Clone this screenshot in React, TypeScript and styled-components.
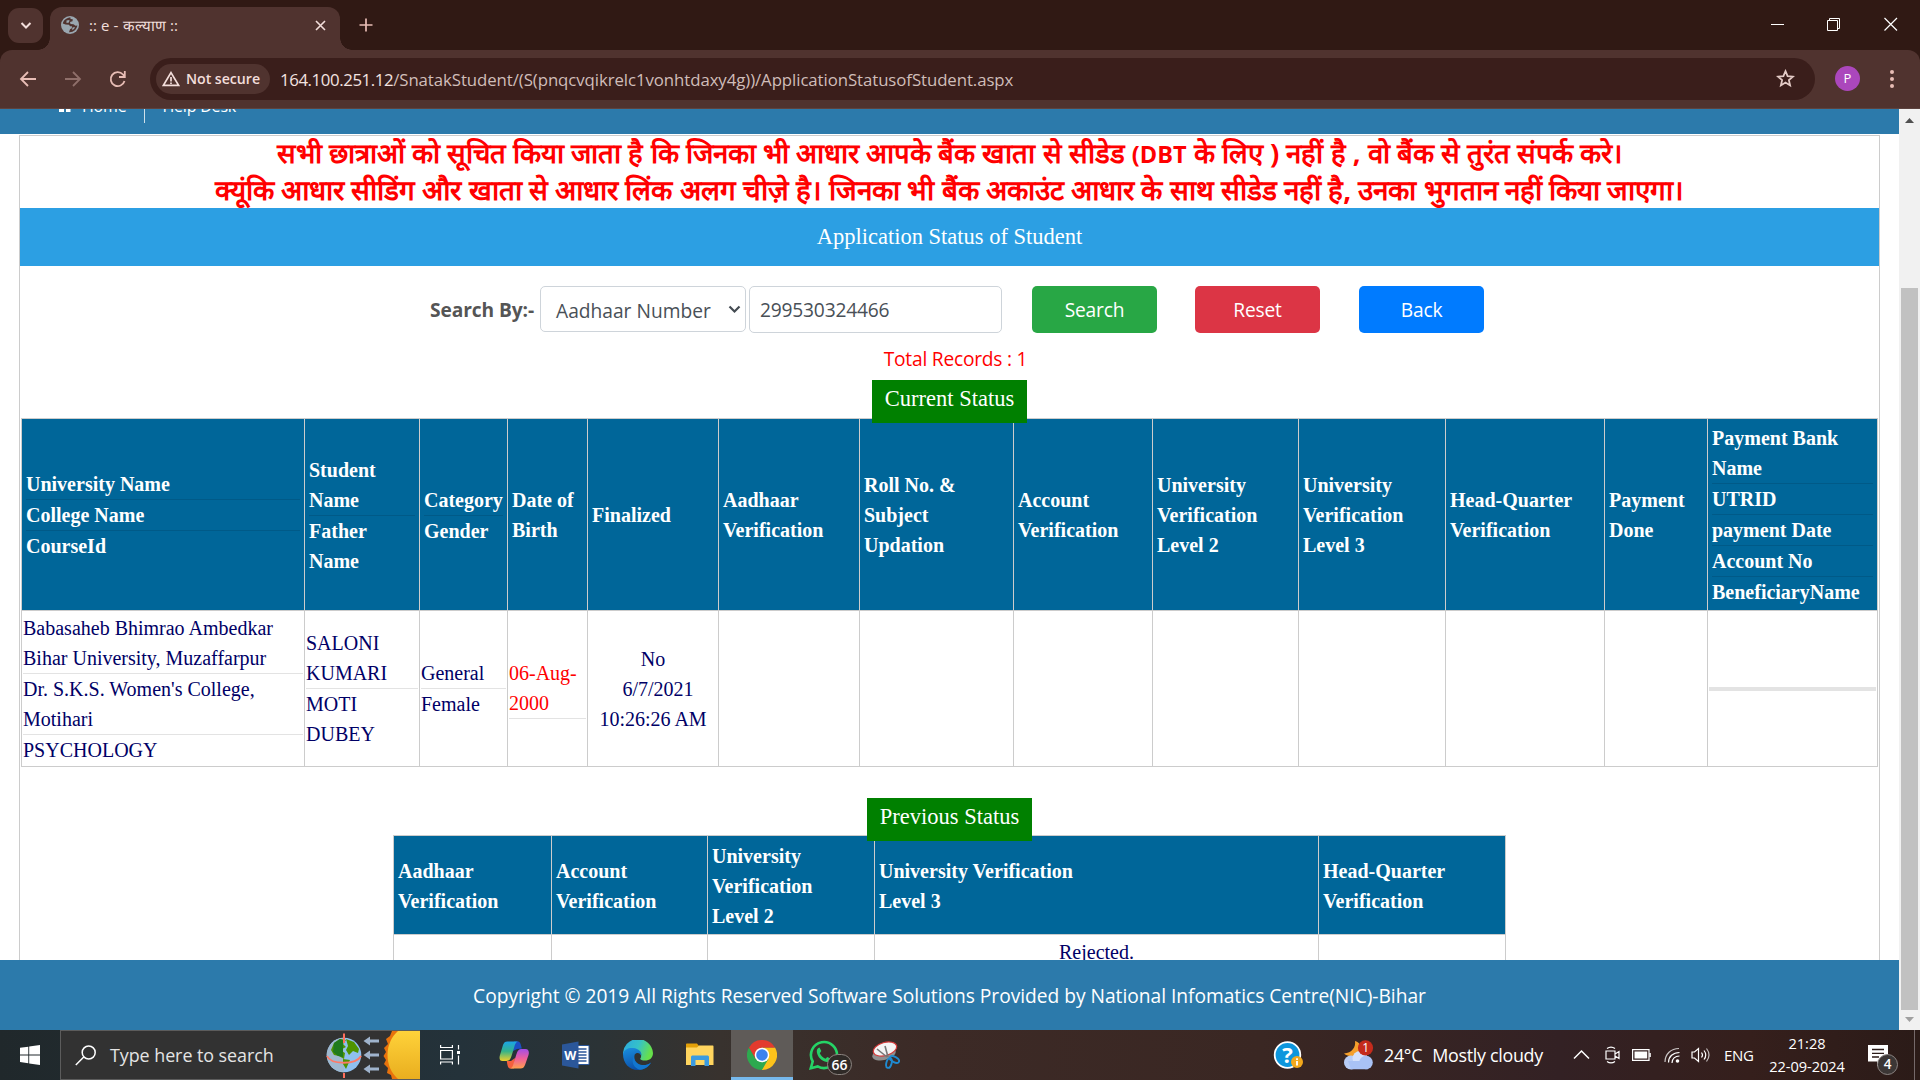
import React from "react";
import styled, { createGlobalStyle, css } from "styled-components";

const sans = `"Open Sans", "Noto Sans", sans-serif`;
const hindi = `"Open Sans", sans-serif`;
const serif = `"Liberation Serif", "Times New Roman", serif`;

const GlobalStyle = createGlobalStyle`
  *, *::before, *::after { box-sizing: border-box; }
  body { margin: 0; overflow: hidden; background: #fff; }
  svg { display: block; flex: none; }
`;

const Screen = styled.div`
  width: 1920px;
  height: 1080px;
  display: flex;
  flex-direction: column;
  overflow: hidden;
  font-family: ${sans};
`;

/* ---------- browser chrome ---------- */

const TabStrip = styled.header`
  height: 50px;
  flex: none;
  display: flex;
  align-items: flex-start;
  padding: 7px 22px 0 8px;
  background: #301914;
`;

const TabSearch = styled.button`
  width: 35px;
  height: 35px;
  margin: 1px 0 0;
  padding: 0;
  border: 0;
  border-radius: 11px;
  background: #50332f;
  display: grid;
  place-items: center;
`;

const Tab = styled.div`
  position: relative;
  width: 290px;
  height: 43px;
  margin-left: 7px;
  padding: 0 14px 7px 11px;
  display: flex;
  align-items: center;
  border-radius: 12px 12px 0 0;
  background: #50332f;

  &::before,
  &::after {
    content: "";
    position: absolute;
    bottom: 0;
    width: 12px;
    height: 12px;
  }
  &::before {
    left: -12px;
    background: radial-gradient(circle at 0 0, transparent 11.5px, #50332f 12px);
  }
  &::after {
    right: -12px;
    background: radial-gradient(circle at 100% 0, transparent 11.5px, #50332f 12px);
  }
`;

const TabTitle = styled.span`
  flex: 1;
  margin-left: 10px;
  font-family: ${hindi};
  font-size: 15px;
  line-height: 20px;
  letter-spacing: 0.1px;
  white-space: pre;
  color: #f0dfdc;
`;

const NewTab = styled.div`
  margin: 11px 0 0 19px;
`;

const WindowButtons = styled.div`
  margin-left: auto;
  padding-top: 10px;
  display: flex;
  gap: 43px;
`;

const Toolbar = styled.div`
  height: 59px;
  flex: none;
  display: flex;
  align-items: center;
  padding: 0 22px 1px 19px;
  background: #50332f;
  border-bottom: 1px solid #5d433f;
  border-radius: 12px 12px 0 0;
`;

const ToolbarBack = styled.div`
  flex: none;
  background: #301914;
`;

const NavIcons = styled.div`
  display: flex;
  align-items: center;
  gap: 27px;
`;

const Omnibox = styled.div`
  flex: none;
  width: 1665px;
  height: 42px;
  margin-left: 24px;
  padding: 0 20px 0 6px;
  display: flex;
  align-items: center;
  border-radius: 21px;
  background: #3a1e1b;
`;

const SecurityChip = styled.div`
  width: 114px;
  height: 30px;
  padding-left: 6px;
  display: flex;
  align-items: center;
  gap: 6px;
  border-radius: 15px;
  background: #50332f;
  color: #f3dedb;
  font-size: 14.2px;
  font-weight: 600;
  letter-spacing: -0.05px;
  white-space: nowrap;
`;

const Url = styled.div`
  flex: 1;
  margin-left: 10px;
  padding-top: 1px;
  font-size: 16.8px;
  letter-spacing: -0.07px;
  color: #d0bdb9;
  white-space: nowrap;
`;

const Host = styled.span`
  color: #f3e3e0;
  letter-spacing: -0.4px;
`;

const Avatar = styled.div`
  width: 25px;
  height: 25px;
  margin-left: 20px;
  border-radius: 50%;
  background: #ab47bc;
  color: #fff;
  font-size: 13px;
  line-height: 25px;
  text-align: center;
`;

const MenuDots = styled.div`
  margin-left: auto;
  margin-right: 4px;
  display: grid;
  gap: 3px;

  i {
    width: 4px;
    height: 4px;
    border-radius: 50%;
    background: #e8bdb5;
  }
`;

/* ---------- page ---------- */

const Browser = styled.div`
  height: 921px;
  flex: none;
  display: flex;
  background: #fff;
`;

const Page = styled.div`
  width: 1899px;
  height: 100%;
  display: flex;
  flex-direction: column;
`;

const SiteNav = styled.nav`
  height: 25px;
  flex: none;
  display: flex;
  align-items: flex-end;
  padding-left: 59px;
  overflow: hidden;
  background: #2c7aab;
  color: #fff;
  font-size: 16px;
`;

const NavLink = styled.a<{ $divided?: boolean }>`
  height: 42px;
  padding-bottom: 14px;
  display: flex;
  align-items: center;
  gap: 11px;
  line-height: 28px;
  letter-spacing: -0.2px;

  svg {
    margin-top: 2px;
  }
  ${(p) =>
    p.$divided &&
    css`
      &::after {
        content: "";
        width: 1px;
        height: 24px;
        margin: 5px 17px -5px 7px;
        background: #cfe0ea;
      }
    `}
`;

const Panel = styled.main`
  flex: 1;
  min-height: 0;
  margin: 1px 19px 0;
  border: 1px solid #ccc;
  border-bottom: 0;
  overflow: hidden;
  display: flex;
  flex-direction: column;
  align-items: center;
`;

const Notice = styled.p<{ $size: number }>`
  flex: none;
  margin: 0;
  height: 36px;
  line-height: 34px;
  font-family: ${hindi};
  font-size: ${(p) => p.$size}px;
  font-weight: 700;
  white-space: nowrap;
  color: #f00;

  small {
    font-size: 23.5px;
  }
`;

const TitleBar = styled.h1`
  flex: none;
  align-self: stretch;
  margin: 0;
  height: 58px;
  background: #2c9fe3;
  color: #fff;
  font: 400 22.5px/58px ${serif};
  text-align: center;
`;

const SearchRow = styled.div`
  flex: none;
  align-self: stretch;
  display: flex;
  align-items: flex-start;
  margin: 20px 0 0 410px;
  height: 47px;
  font-size: 19.2px;
  line-height: 47px;
  color: #495057;
`;

const SearchLabel = styled.label`
  width: 110px;
  font-weight: 700;
  letter-spacing: -0.1px;
  color: #555;
`;

const Select = styled.div`
  width: 206px;
  height: 46px;
  padding: 2px 4px 0 15px;
  display: flex;
  align-items: center;
  justify-content: space-between;
  border: 1px solid #ced4da;
  border-radius: 5px;

  svg {
    margin-bottom: 2px;
  }
`;

const TextBox = styled.input`
  width: 253px;
  height: 47px;
  margin-left: 3px;
  padding: 0 10px;
  border: 1px solid #ced4da;
  border-radius: 5px;
  font: 19.2px ${sans};
  letter-spacing: -0.2px;
  color: #495057;
  background: #fff;
`;

const Button = styled.button<{ $color: string; $gap: number }>`
  width: 125px;
  height: 47px;
  margin-left: ${(p) => p.$gap}px;
  padding: 0;
  border: 0;
  border-radius: 5px;
  background: ${(p) => p.$color};
  color: #fff;
  font: 19.2px ${sans};
  letter-spacing: -0.2px;
`;

const Total = styled.div`
  flex: none;
  height: 47px;
  margin-left: 12px;
  padding-top: 11px;
  font-size: 19.2px;
  line-height: 30px;
  letter-spacing: -0.23px;
  color: #f00;
`;

const Badge = styled.div<{ $overlap: number; $width: number }>`
  flex: none;
  position: relative;
  z-index: 1;
  width: ${(p) => p.$width}px;
  height: 43px;
  margin-bottom: -${(p) => p.$overlap}px;
  padding-top: 2px;
  background: #008000;
  color: #fff;
  font: 22.5px/33px ${serif};
  text-align: center;
  white-space: nowrap;
`;

const Grid = styled.table<{ $width: number; $gapBelow?: number }>`
  flex: none;
  width: ${(p) => p.$width}px;
  margin-bottom: ${(p) => p.$gapBelow ?? 0}px;
  border-collapse: collapse;
  table-layout: fixed;
  font: 20px/30px ${serif};

  th,
  td {
    border: 1px solid #ccc;
  }
`;

const HeadCell = styled.th`
  padding: 4px 4px 3px;
  background: #006699;
  color: #fff;
  font-weight: 700;
  text-align: left;
`;

const Cell = styled.td<{ $center?: boolean; $red?: boolean }>`
  padding: 1px;
  color: ${(p) => (p.$red ? "#f00" : "#000066")};
  text-align: ${(p) => (p.$center ? "center" : "left")};
`;

const Row = styled.tr<{ $h: number }>`
  height: ${(p) => p.$h}px;
`;

const Rule = styled.hr<{ $thick?: boolean }>`
  margin: 0;
  border: 0;
  height: ${(p) => (p.$thick ? 4 : 1)}px;
  background: rgba(0, 0, 0, 0.11);
`;

const Footer = styled.footer`
  flex: none;
  height: 70px;
  padding-top: 1px;
  background: #2c7aab;
  color: #fff;
  font-size: 19.2px;
  line-height: 70px;
  letter-spacing: -0.02px;
  text-align: center;
`;

const Scrollbar = styled.div`
  width: 21px;
  display: flex;
  flex-direction: column;
  align-items: center;
  padding: 9px 0 8px;
  background: #f1f1f1;
`;

const Thumb = styled.div`
  width: 17px;
  height: 722px;
  margin: 165px 0 auto;
  background: #c1c1c1;
`;

/* ---------- taskbar ---------- */

const Taskbar = styled.footer`
  height: 50px;
  flex: none;
  display: flex;
  align-items: center;
  background: linear-gradient(
    90deg,
    #20282b 0,
    #24323a 460px,
    #2b3336 600px,
    #38322e 720px,
    #3c2a26 930px,
    #3a2723 1260px,
    #332124 1560px,
    #351f1c 1750px,
    #2b1b18 1920px
  );
  color: #fff;
`;

const Start = styled.div`
  width: 60px;
  display: grid;
  place-items: center;
`;

const TaskSearch = styled.div`
  width: 360px;
  height: 50px;
  padding-left: 14px;
  display: flex;
  align-items: center;
  border: 1px solid #5c5c5c;
  border-right: 0;
  background: #323232;
  font-size: 17.9px;
  letter-spacing: -0.05px;
  color: #e4e4e4;
  white-space: nowrap;

  span {
    margin-left: 14px;
    width: 216px;
  }
`;

const TaskButton = styled.div<{ $active?: boolean; $first?: boolean }>`
  position: relative;
  flex: none;
  width: ${(p) => (p.$first ? 60 : 62)}px;
  margin-right: ${(p) => (p.$first ? 3 : 0)}px;
  height: 50px;
  display: grid;
  place-items: center;
  ${(p) =>
    p.$active &&
    css`
      background: #5f5b58;
      border-bottom: 3px solid #76b9ed;
      padding-top: 3px;
    `}
`;

const Count = styled.b`
  position: absolute;
  left: 34px;
  top: 24px;
  width: 25px;
  height: 21px;
  border: 1px solid #8c8480;
  border-radius: 11px;
  background: #2f2a27;
  font-size: 14px;
  font-weight: 600;
  line-height: 19px;
  text-align: center;
`;

const Tray = styled.div`
  margin-left: auto;
  height: 100%;
  display: flex;
  align-items: center;
`;

const Weather = styled.div`
  width: 230px;
  margin-left: 40px;
  display: flex;
  align-items: center;
  font-size: 17.9px;
  letter-spacing: -0.3px;
  white-space: nowrap;

  span {
    margin-left: 10px;
  }
`;

const TrayIcons = styled.div`
  width: 151px;
  display: grid;
  grid-template-columns: 32px 27px 32px 27px 20px;
  align-items: center;
`;

const Lang = styled.span`
  width: 44px;
  font-size: 15px;
  letter-spacing: -0.3px;
`;

const Clock = styled.div`
  width: 78px;
  font-size: 14.6px;
  line-height: 23px;
  text-align: center;
  letter-spacing: -0.05px;
`;

const ActionCenter = styled.div`
  position: relative;
  width: 46px;
  height: 34px;
  margin-left: 22px;
  padding-top: 7px;
`;

const AlertCount = styled.span`
  position: absolute;
  left: 9px;
  top: 16px;
  width: 21px;
  height: 21px;
  border: 1px solid #8b8482;
  border-radius: 50%;
  background: #3b3635;
  font-size: 13.5px;
  font-weight: 600;
  line-height: 19px;
  text-align: center;
`;

const ShowDesktop = styled.i`
  width: 6px;
  height: 50px;
  border-left: 1px solid #75696a;
`;

/* ---------- icons ---------- */

const Stroke = ({ d, w = 20, h = 20, sw = 2, color = "#e8bdb5" }: { d: string; w?: number; h?: number; sw?: number; color?: string }) => (
  <svg width={w} height={h} viewBox={`0 0 ${w} ${h}`} fill="none" stroke={color} strokeWidth={sw}>
    <path d={d} />
  </svg>
);

const Globe = () => (
  <svg width="18" height="18" viewBox="0 0 18 18">
    <circle cx="9" cy="9" r="9" fill="#9aa7b0" />
    <path d="M9.500 1.600 C6 1.600 2.500 4 1.800 7.600 L4.500 8.600 L8 8.800 L9 10.200 L11 10.200 L10.800 12.200 L9 13.200 L8 16.300 C12.500 16.600 15.800 13.500 16.400 9.600 L14.500 9.800 L12.500 8.200 L9.500 8 L9 6 L11.500 5.200 L11.800 3.200 L9.500 3Z" fill="#50332f" />
    <path d="M5.500 4.500 L8.500 4 L8 6.500 L5.500 7Z M11.500 11.500 L14 11 L13 13 L11 14Z" fill="#9aa7b0" />
  </svg>
);

const Warning = () => (
  <svg width="18" height="16" viewBox="0 0 18 16" fill="none" stroke="#f3dedb" strokeWidth="1.7">
    <path d="M9 1.6 L16.6 14.4 H1.4Z" strokeLinejoin="miter" />
    <path d="M9 6 v4.4 M9 11.4 v1.7" />
  </svg>
);

const Star = () => (
  <svg width="19" height="19" viewBox="0 0 19 19" fill="none" stroke="#e3cbc6" strokeWidth="1.8">
    <path d="M9.5 2.2 L11.6 7.1 L17 7.6 L12.9 11.1 L14.1 16.4 L9.5 13.6 L4.9 16.4 L6.1 11.1 L2 7.6 L7.4 7.1Z" />
  </svg>
);

const WindowsLogo = () => (
  <svg width="20" height="20" viewBox="0 0 20 20" fill="#fff">
    <path d="M0 2.8 L8.3 1.7 V9.5 H0Z M9.2 1.5 L20 0 V9.5 H9.2Z M0 10.4 H8.3 V18.2 L0 17.1Z M9.2 10.4 H20 V20 L9.2 18.4Z" />
  </svg>
);

const EarthAndSun = () => (
  <svg width="94" height="48" viewBox="0 0 94 48">
    <circle cx="18" cy="24" r="17.3" fill="#8fc0ee" />
    <path d="M18 6.7 A17.3 17.3 0 0 0 18 41.300 Z" fill="#9fb9cf" />
    <path d="M8 12 L14 8 L20 9 L17 13 L20 16 L14 19 L19 22 L18 28 L13 25 L8 24 L5 19Z M20 8 L28 11 L33 18 L32 22 L27 20 L23 24 L20 19 L22 15Z M17 28 L24 29 L20 38 L17 33Z" fill="#4f9300" />
    <path d="M8 12 L14 8 L17 9 V26 L12 25 L7 21Z" fill="#1f7a1d" />
    <path d="M1 25 C5 34 30 34 35 25" fill="none" stroke="#ff7a66" strokeWidth="1.8" />
    <path d="M18 2.500 V12 M18 42 V47" stroke="#ff6f5c" strokeWidth="2" />
    <path d="M37.500 10 L44 5.500 V8.500 H53 V11.500 H44 V14.500Z M37.500 24 L44 19.500 V22.500 H53 V25.500 H44 V28.500Z M37.500 38 L44 33.500 V36.500 H53 V39.500 H44 V42.500Z" fill="#9fb3cc" />
    <path d="M66 0 L64 5 L60 8 L62 13 L58 17 L60 21 L57.500 25 L60 29 L58 33 L62 37 L61 42 L65 44 L66 48 H94 V0Z" fill="#e8720c" />
    <path d="M72 0 C58 12 58 36 72 48 H94 V0Z" fill="url(#sun)" />
    <defs>
      <linearGradient id="sun" x1="0" y1="0" x2="0" y2="1">
        <stop offset="0" stopColor="#ffd23a" />
        <stop offset="1" stopColor="#e9ae1f" />
      </linearGradient>
    </defs>
  </svg>
);

const TaskView = () => (
  <svg width="20" height="20" viewBox="0 0 20 20" fill="none" stroke="#fff" strokeWidth="1.2">
    <path d="M.6 0 V2.500 H12.400 V0 M.6 5.500 H12.400 V14 H.6Z M.6 19.500 V17 H12.400 V19.500 M18.500 0 V4.500 M18.500 10.500 V19.500" />
    <path d="M17 6 h3 v3 h-3z" fill="#fff" stroke="none" />
  </svg>
);

const Copilot = () => (
  <svg width="30" height="28" viewBox="0 0 30 28">
    <defs>
      <linearGradient id="cpa" x1="0" y1="0" x2="0" y2="1">
        <stop offset="0" stopColor="#1ba4e8" />
        <stop offset=".5" stopColor="#34b38a" />
        <stop offset="1" stopColor="#f0d02a" />
      </linearGradient>
      <linearGradient id="cpb" x1="0" y1="0" x2="0" y2="1">
        <stop offset="0" stopColor="#a34de8" />
        <stop offset=".5" stopColor="#f0609a" />
        <stop offset="1" stopColor="#ffa04d" />
      </linearGradient>
    </defs>
    <path d="M15 .5 H18.500 C21 .5 21.500 2 22.800 7.500 L18 8 L14 10Z" fill="#1b4fc4" />
    <path d="M15 27.500 H11.500 C9 27.500 8.500 25 7.800 20 L12 20 L16 17Z" fill="#f4603e" />
    <path d="M8.500 .5 H19 C16.500 1 16 3.500 15 7 L12.500 15 C11.500 18.500 10 20 7.500 20 H3.500 C.5 20 0 17 1 14 L4 4 C5 1.500 6 .5 8.500 .5Z" fill="url(#cpa)" />
    <path d="M21.500 27.500 H11 C13.500 27 14 24.500 15 21 L17.500 13 C18.500 9.500 20 8 22.500 8 H26.500 C29.500 8 30.500 11 29.500 14 L26 24 C25 26.500 24 27.500 21.500 27.500Z" fill="url(#cpb)" />
  </svg>
);

const WordIcon = () => (
  <svg width="28" height="28" viewBox="0 0 28 28">
    <path d="M13 4.500 H27 V23.500 H13Z" fill="#fff" stroke="#2b579a" strokeWidth="1" />
    <path d="M16 8 H24.500 M16 11 H24.500 M16 14 H24.500 M16 17 H24.500 M16 20 H24.500" stroke="#2b579a" strokeWidth="1.500" />
    <path d="M0 3.500 L16.500 .5 V27.500 L0 24.500Z" fill="#2b579a" />
    <text x="8.200" y="18.800" fontSize="12.500" fontWeight="700" fill="#fff" textAnchor="middle" fontFamily="Open Sans, sans-serif">W</text>
  </svg>
);

const Edge = () => (
  <svg width="30" height="30" viewBox="0 0 30 30">
    <defs>
      <linearGradient id="ea" x1="0" y1="0" x2="1" y2=".3">
        <stop offset="0" stopColor="#2aa7e0" />
        <stop offset=".55" stopColor="#35c1c9" />
        <stop offset="1" stopColor="#66e04b" />
      </linearGradient>
      <linearGradient id="eb" x1="0" y1="0" x2=".4" y2="1">
        <stop offset="0" stopColor="#1a8fe0" />
        <stop offset="1" stopColor="#0b4fa8" />
      </linearGradient>
    </defs>
    <path d="M0 15 A15 15 0 0 1 30 13 C30 18 26.500 20.500 22 20.500 C19 20.500 17 19.500 17.300 18.500 C19 16.500 18 13 15 12 L6 9Z" fill="url(#ea)" />
    <path d="M0 14 C1 9 6 7.500 10 8 C16 8.500 19 12 18.500 16 C17.500 13 13.500 11.500 11.500 15 C10 20 14 24.500 19 25 C22.500 25.300 25.500 24.500 28 22.500 C25.500 27 21 30 15 30 C6 30 0 23 0 14Z" fill="url(#eb)" />
    <path d="M11.500 15 C7 21 11 28.500 17 29.800 C22 29.300 26 26.500 28 22.500 C25.500 24.500 22.500 25.300 19 25 C14 24.500 10 20 11.500 15Z" fill="#1276cf" />
  </svg>
);

const Folder = () => (
  <svg width="28" height="24" viewBox="0 0 28 24">
    <path d="M0 1.500 C0 .7.500 .5 1 .5 H11 L13 3 V7 H0Z" fill="#e3a008" />
    <path d="M0 4.500 H11 L13 2.500 H26.500 C27.300 2.500 27.500 3 27.500 3.500 V22 H0Z" fill="#ffd55f" />
    <path d="M5 23 V14.500 C5 13 5.500 12.500 7 12.500 H21 C22.500 12.500 23 13 23 14.500 V23 H18.500 V17 H9.500 V23Z" fill="#3c9be0" />
  </svg>
);

const Chrome = () => (
  <svg width="30" height="30" viewBox="0 0 30 30">
    <path d="M15 15 V7.500 H28 A15 15 0 0 1 15 30 Z" fill="#fcc21b" />
    <path d="M15 15 L21.500 18.800 L15 30 A15 15 0 0 1 2 7.500 L8.500 18.800Z" fill="#2da94f" />
    <path d="M2 7.500 A15 15 0 0 1 28 7.500 H15 L8.500 18.700Z" fill="#e33b2e" />
    <circle cx="15" cy="15" r="7.300" fill="#fff" />
    <circle cx="15" cy="15" r="5.800" fill="#3b82ee" />
  </svg>
);

const WhatsApp = () => (
  <svg width="30" height="30" viewBox="0 0 30 30">
    <path d="M1.800 28.200 L3.700 21.500 A13 13 0 1 1 8.700 26.400Z" fill="none" stroke="#25d366" strokeWidth="2.600" />
    <path d="M10.500 7.500 L12.300 11 L10.800 13.200 C12 15.800 13.800 17.500 16.500 18.700 L18.300 17 L22 18.800 C21.800 21 20 22.300 17.800 22 C12.500 21.200 8.500 17 7.800 12 C7.500 9.500 8.800 7.800 10.500 7.500Z" fill="#25d366" />
  </svg>
);

const Snip = () => (
  <svg width="28" height="28" viewBox="0 0 28 28">
    <ellipse cx="12" cy="13" rx="12" ry="6" fill="#8f8f8f" transform="rotate(-14 12 13)" />
    <ellipse cx="13" cy="8" rx="12" ry="6.500" fill="#f4f4f4" stroke="#d63b3b" strokeWidth="1.200" transform="rotate(-16 13 8)" />
    <path d="M5 8 L15 16 M13 5 L16 16" stroke="#777" strokeWidth="1.600" />
    <ellipse cx="17" cy="22" rx="2.600" ry="5" fill="none" stroke="#1f8ad0" strokeWidth="1.900" transform="rotate(15 17 22)" />
    <ellipse cx="22.500" cy="18.500" rx="2.600" ry="5" fill="none" stroke="#1f8ad0" strokeWidth="1.900" transform="rotate(-62 22.500 18.500)" />
  </svg>
);

const HelpIcon = () => (
  <svg width="30" height="34" viewBox="0 0 30 34">
    <circle cx="14.500" cy="17" r="12.800" fill="#0d96dd" stroke="#fff" strokeWidth="1.800" />
    <text x="14.500" y="25" fontSize="22" fontWeight="700" fill="#fff" textAnchor="middle" fontFamily="Open Sans, sans-serif">?</text>
    <circle cx="24" cy="24" r="6" fill="#f3a81c" />
    <path d="M24 20.300 v1.800 M24 23 v4.600" stroke="#fff" strokeWidth="1.800" />
  </svg>
);

const WeatherIcon = () => (
  <svg width="31" height="32" viewBox="0 0 31 32">
    <path d="M12 2 C13 8 9 14 1 14.500 C6 19 16 18 18 11 C19 7 16 3 12 2Z" fill="#f5a02c" />
    <circle cx="8" cy="23.500" r="7" fill="#b9cdf6" />
    <circle cx="17" cy="19.500" r="7.500" fill="#d5e1fb" />
    <circle cx="23" cy="23.500" r="6.800" fill="#a9c2f5" />
    <path d="M5 22 H25 V30.300 H8Z" fill="#a9c2f5" />
    <circle cx="22.500" cy="8.800" r="7.600" fill="#c42b1c" />
    <text x="22.500" y="13.200" fontSize="12" fill="#fff" textAnchor="middle" fontFamily="Open Sans, sans-serif">1</text>
  </svg>
);

const Meet = () => (
  <svg width="15" height="18" viewBox="0 0 15 18" fill="none" stroke="#fff" strokeWidth="1.200">
    <path d="M1 5 H10 V13 H1Z M10 8 L14 5.500 V12.500 L10 10 M2 2.500 Q6 -.3 10 2.500 M2 15.500 Q6 18.300 10 15.500" />
  </svg>
);

const Battery = () => (
  <svg width="19" height="12" viewBox="0 0 19 12">
    <path d="M.6 .6 H17 V11.400 H.6Z" fill="none" stroke="#fff" strokeWidth="1.200" />
    <path d="M2.500 2.500 H15.200 V9.500 H2.500Z M17.300 4 H18.800 V8 H17.300Z" fill="#fff" />
  </svg>
);

const Wifi = () => (
  <svg width="17" height="17" viewBox="0 0 17 17" fill="none" stroke="#fff" strokeWidth="1.200">
    <path d="M1 15 C1 7 7 1.500 15 1.500" opacity=".75" />
    <path d="M4.500 15.500 C4.500 9.500 9 5.500 15.500 5.500 M8 16 C8 11.800 11 9 15.500 9" />
    <circle cx="13.500" cy="14" r="1.800" fill="#fff" stroke="none" />
  </svg>
);

const Volume = () => (
  <svg width="20" height="18" viewBox="0 0 20 18" fill="none" stroke="#fff" strokeWidth="1.200">
    <path d="M1 6 H3.500 L7.500 2.500 V15.500 L3.500 12 H1Z M10.500 6.500 Q12.500 9 10.500 11.500 M13 4.500 Q16.500 9 13 13.500" />
    <path d="M15.500 2.500 Q20.500 9 15.500 15.500" opacity=".7" />
  </svg>
);

/* ---------- tables ---------- */

type Lines = string[];

const Stack = ({ lines }: { lines: Lines }) => (
  <>
    {lines.map((line, i) => (
      <React.Fragment key={line}>
        {i > 0 && <Rule />}
        <div>{line}</div>
      </React.Fragment>
    ))}
  </>
);

const currentColumns: { width: number; head: Lines }[] = [
  { width: 283, head: ["University Name", "College Name", "CourseId"] },
  { width: 115, head: ["Student Name", "Father Name"] },
  { width: 88, head: ["Category", "Gender"] },
  { width: 80, head: ["Date of Birth"] },
  { width: 131, head: ["Finalized"] },
  { width: 141, head: ["Aadhaar Verification"] },
  { width: 154, head: ["Roll No. & Subject Updation"] },
  { width: 139, head: ["Account Verification"] },
  { width: 146, head: ["University Verification Level 2"] },
  { width: 147, head: ["University Verification Level 3"] },
  { width: 159, head: ["Head-Quarter Verification"] },
  { width: 103, head: ["Payment Done"] },
  { width: 170, head: ["Payment Bank Name", "UTRID", "payment Date", "Account No", "BeneficiaryName"] },
];

const previousColumns = [
  { width: 158, head: <>Aadhaar<br />Verification</> },
  { width: 156, head: <>Account<br />Verification</> },
  { width: 167, head: <>University<br />Verification<br />Level 2</> },
  { width: 444, head: <>University Verification<br />Level 3</> },
  { width: 187, head: <>Head-Quarter<br />Verification</> },
];

const CurrentTable = () => (
  <Grid $width={1857} $gapBelow={31}>
    <colgroup>
      {currentColumns.map((c, i) => (
        <col key={i} width={c.width} />
      ))}
    </colgroup>
    <tbody>
      <Row $h={192}>
        {currentColumns.map((c, i) => (
          <HeadCell key={i}>
            <Stack lines={c.head} />
          </HeadCell>
        ))}
      </Row>
      <Row $h={156}>
        <Cell>
          <Stack lines={["Babasaheb Bhimrao Ambedkar Bihar University, Muzaffarpur", "Dr. S.K.S. Women's College, Motihari", "PSYCHOLOGY"]} />
        </Cell>
        <Cell>
          <Stack lines={["SALONI KUMARI", "MOTI DUBEY"]} />
        </Cell>
        <Cell>
          <Stack lines={["General", "Female"]} />
        </Cell>
        <Cell $red>
          06-Aug-
          <br />
          2000
          <Rule />
        </Cell>
        <Cell $center>
          No
          <br />
          &nbsp; 6/7/2021
          <br />
          10:26:26 AM
        </Cell>
        {[5, 6, 7, 8, 9, 10, 11].map((i) => (
          <Cell key={i} />
        ))}
        <Cell>
          <Rule $thick />
        </Cell>
      </Row>
    </tbody>
  </Grid>
);

const PreviousTable = () => (
  <Grid $width={1113}>
    <colgroup>
      {previousColumns.map((c, i) => (
        <col key={i} width={c.width} />
      ))}
    </colgroup>
    <tbody>
      <Row $h={99}>
        {previousColumns.map((c, i) => (
          <HeadCell key={i}>{c.head}</HeadCell>
        ))}
      </Row>
      <Row $h={35}>
        <Cell />
        <Cell />
        <Cell />
        <Cell $center>Rejected.</Cell>
        <Cell />
      </Row>
    </tbody>
  </Grid>
);

export default function App() {
  return (
    <Screen>
      <GlobalStyle />
      <TabStrip>
        <TabSearch>
          <Stroke d="M1.500 2 L6 6.500 L10.500 2" w={12} h={9} color="#f3dedb" />
        </TabSearch>
        <Tab>
          <Globe />
          <TabTitle>:: e - कल्याण ::</TabTitle>
          <Stroke d="M1 1 L10 10 M10 1 L1 10" w={11} h={11} sw={1.6} color="#f3dedb" />
        </Tab>
        <NewTab>
          <Stroke d="M7 .5 V13.500 M.5 7 H13.500" w={14} h={14} sw={1.7} />
        </NewTab>
        <WindowButtons>
          <Stroke d="M0 7.500 H13" w={13} h={14} sw={1} color="#fff" />
          <Stroke d="M.5 3.500 H10.500 V13.500 H.5Z M2.500 3 V1.500 H12.500 V11.500 H11" w={14} h={14} sw={1} color="#fff" />
          <Stroke d="M.5 1 L13 13.500 M13 1 L.5 13.500" w={14} h={14} sw={1.2} color="#fff" />
        </WindowButtons>
      </TabStrip>

      <ToolbarBack>
        <Toolbar>
          <NavIcons>
            <Stroke d="M17 9 H2.500 M9 2 L2 9 L9 16" w={18} h={18} sw={1.8} />
            <Stroke d="M1 9 H15.500 M9 2 L16 9 L9 16" w={18} h={18} sw={1.8} color="#8f6f6a" />
            <Stroke d="M15.500 11 A7 7 0 1 1 14 4.500 L15.500 6.500 M15.800 1 V7 H10" w={17} h={18} sw={1.8} />
          </NavIcons>
          <Omnibox>
            <SecurityChip>
              <Warning />
              Not secure
            </SecurityChip>
            <Url>
              <Host>164.100.251.12</Host>/SnatakStudent/(S(pnqcvqikrelc1vonhtdaxy4g))/ApplicationStatusofStudent.aspx
            </Url>
            <Star />
          </Omnibox>
          <Avatar>P</Avatar>
          <MenuDots>
            <i />
            <i />
            <i />
          </MenuDots>
        </Toolbar>
      </ToolbarBack>

      <Browser>
        <Page>
          <SiteNav>
            <NavLink $divided>
              <svg width="12" height="10" viewBox="0 0 12 10" fill="#fff">
                <path d="M0 0 H5 V10 H0Z M7 0 H11.500 V10 H7Z" />
              </svg>
              Home
            </NavLink>
            <NavLink>Help Desk</NavLink>
          </SiteNav>
          <Panel>
            <Notice $size={27.5}>
              सभी छात्राओं को सूचित किया जाता है कि जिनका भी आधार आपके बैंक खाता से सीडेड <small>(DBT</small> के लिए ) नहीं है , वो बैंक से तुरंत संपर्क करे।
            </Notice>
            <Notice $size={27.83}>
              क्यूंकि आधार सीडिंग और खाता से आधार लिंक अलग चीज़े है। जिनका भी बैंक अकाउंट आधार के साथ सीडेड नहीं है, उनका भुगतान नहीं किया जाएगा।
            </Notice>
            <TitleBar>Application Status of Student</TitleBar>
            <SearchRow>
              <SearchLabel>Search By:-</SearchLabel>
              <Select>
                Aadhaar Number
                <Stroke d="M1.500 1.500 L6.500 6.500 L11.500 1.500" w={13} h={9} sw={2.2} color="#444b52" />
              </Select>
              <TextBox defaultValue="299530324466" />
              <Button $color="#28a745" $gap={30}>Search</Button>
              <Button $color="#dc3545" $gap={38}>Reset</Button>
              <Button $color="#007bff" $gap={39}>Back</Button>
            </SearchRow>
            <Total>Total Records : 1</Total>
            <Badge $overlap={5} $width={155}>Current Status</Badge>
            <CurrentTable />
            <Badge $overlap={6} $width={165}>Previous Status</Badge>
            <PreviousTable />
          </Panel>
          <Footer>
            Copyright © 2019 All Rights Reserved Software Solutions Provided by National Infomatics Centre(NIC)-Bihar
          </Footer>
        </Page>
        <Scrollbar>
          <svg width="9" height="5" viewBox="0 0 9 5"><path d="M0 5 L4.500 0 L9 5Z" fill="#505050" /></svg>
          <Thumb />
          <svg width="9" height="5" viewBox="0 0 9 5"><path d="M0 0 L4.500 5 L9 0Z" fill="#a0a0a0" /></svg>
        </Scrollbar>
      </Browser>

      <Taskbar>
        <Start>
          <WindowsLogo />
        </Start>
        <TaskSearch>
          <Stroke d="M.8 20 L8.500 12.300 M7.200 7.500 A6.500 6.500 0 1 0 20.200 7.500 A6.500 6.500 0 1 0 7.200 7.500" w={21} h={21} sw={1.5} color="#fff" />
          <span>Type here to search</span>
          <EarthAndSun />
        </TaskSearch>
        <TaskButton $first><TaskView /></TaskButton>
        <TaskButton><Copilot /></TaskButton>
        <TaskButton><WordIcon /></TaskButton>
        <TaskButton><Edge /></TaskButton>
        <TaskButton><Folder /></TaskButton>
        <TaskButton $active><Chrome /></TaskButton>
        <TaskButton>
          <WhatsApp />
          <Count>66</Count>
        </TaskButton>
        <TaskButton><Snip /></TaskButton>
        <Tray>
          <HelpIcon />
          <Weather>
            <WeatherIcon />
            <span>24°C</span>
            <span>Mostly cloudy</span>
          </Weather>
          <TrayIcons>
            <Stroke d="M1 9.500 L8.500 2 L16 9.500" w={17} h={12} sw={1.5} color="#fff" />
            <Meet />
            <Battery />
            <Wifi />
            <Volume />
          </TrayIcons>
          <Lang>ENG</Lang>
          <Clock>
            <div>21:28</div>
            <div>22-09-2024</div>
          </Clock>
          <ActionCenter>
            <svg width="21" height="22" viewBox="0 0 21 22">
              <path d="M0 0 H20 V16.500 H14 L9 21.500 V16.500 H0Z" fill="#fff" />
              <path d="M4 4.500 H16 M4 8.300 H16 M4 12 H11" stroke="#2b1b18" strokeWidth="1.300" />
            </svg>
            <AlertCount>4</AlertCount>
          </ActionCenter>
          <ShowDesktop />
        </Tray>
      </Taskbar>
    </Screen>
  );
}
